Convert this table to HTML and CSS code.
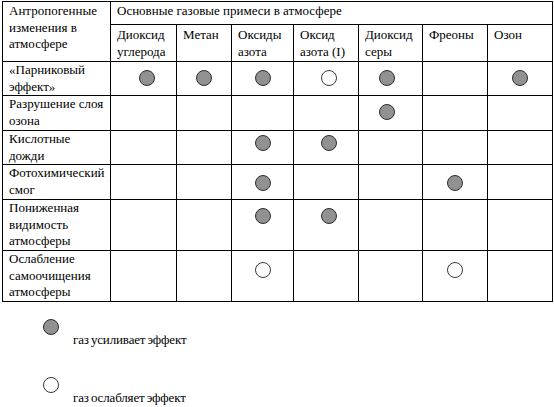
FILE: index.html
```html
<!DOCTYPE html>
<html lang="ru">
<head>
<meta charset="utf-8">
<link rel="stylesheet" href="styles.css">
</head>
<body>
<table class="grid">
  <colgroup>
    <col class="c1"><col class="c2"><col class="c3"><col class="c4"><col class="c5"><col class="c6"><col class="c7"><col class="c8">
  </colgroup>
  <tr class="h1">
    <td rowspan="2">Антропогенные изменения в атмосфере</td>
    <td colspan="7">Основные газовые примеси в атмосфере</td>
  </tr>
  <tr class="h2">
    <td>Диоксид углерода</td>
    <td>Метан</td>
    <td>Оксиды азота</td>
    <td>Оксид азота (I)</td>
    <td>Диоксид серы</td>
    <td>Фреоны</td>
    <td>Озон</td>
  </tr>
  <tr class="r r1">
    <td>«Парниковый эффект»</td>
    <td class="m"><span class="dot gray nudge-r"></span></td>
    <td class="m"><span class="dot gray"></span></td>
    <td class="m"><span class="dot gray"></span></td>
    <td class="m"><span class="dot white nudge-r"></span></td>
    <td class="m"><span class="dot gray nudge-l"></span></td>
    <td class="m"></td>
    <td class="m"><span class="dot gray"></span></td>
  </tr>
  <tr class="r r2">
    <td>Разрушение слоя озона</td>
    <td class="m"></td>
    <td class="m"></td>
    <td class="m"></td>
    <td class="m"></td>
    <td class="m"><span class="dot gray nudge-l"></span></td>
    <td class="m"></td>
    <td class="m"></td>
  </tr>
  <tr class="r r3">
    <td>Кислотные дожди</td>
    <td class="m"></td>
    <td class="m"></td>
    <td class="m"><span class="dot gray"></span></td>
    <td class="m"><span class="dot gray nudge-r"></span></td>
    <td class="m"></td>
    <td class="m"></td>
    <td class="m"></td>
  </tr>
  <tr class="r r4">
    <td>Фотохимический смог</td>
    <td class="m"></td>
    <td class="m"></td>
    <td class="m"><span class="dot gray"></span></td>
    <td class="m"></td>
    <td class="m"></td>
    <td class="m"><span class="dot gray"></span></td>
    <td class="m"></td>
  </tr>
  <tr class="r r5">
    <td>Пониженная видимость атмосферы</td>
    <td class="m"></td>
    <td class="m"></td>
    <td class="m"><span class="dot gray"></span></td>
    <td class="m"><span class="dot gray nudge-r"></span></td>
    <td class="m"></td>
    <td class="m"></td>
    <td class="m"></td>
  </tr>
  <tr class="r r6">
    <td>Ослабление самоочищения атмосферы</td>
    <td class="m"></td>
    <td class="m"></td>
    <td class="m"><span class="dot white"></span></td>
    <td class="m"></td>
    <td class="m"></td>
    <td class="m"><span class="dot white"></span></td>
    <td class="m"></td>
  </tr>
</table>

<div class="legend">
  <div class="item">
    <span class="dot gray"></span>
    <span class="label">газ усиливает эффект</span>
  </div>
  <div class="item second">
    <span class="dot white"></span>
    <span class="label">газ ослабляет эффект</span>
  </div>
</div>
</body>
</html>
```

FILE: styles.css
```css
html, body {
  margin: 0;
  padding: 0;
  background: #ffffff;
}

body {
  font-family: "Liberation Serif", "Times New Roman", serif;
  font-size: 13px;
  line-height: 16.5px;
  color: #000000;
  padding: 1px 0 0 2px;
}

.grid {
  border-collapse: collapse;
  table-layout: fixed;
  width: 550px;
}

.c1 { width: 108px; }
.c2 { width: 66px; }
.c3 { width: 55px; }
.c4 { width: 62px; }
.c5 { width: 65px; }
.c6 { width: 64px; }
.c7 { width: 65px; }
.c8 { width: 65px; }

.grid td {
  border: 1px solid #000000;
  padding: 0 4px 0 6px;
  vertical-align: top;
  box-sizing: border-box;
}

.h1 { height: 23px; }
.h1 td { padding-top: 1px; }
.h2 { height: 37px; }
.h2 td { padding-top: 2px; }
.r1 { height: 33px; }
.r2 { height: 35px; }
.r3 { height: 34px; }
.r4 { height: 35px; }
.r5 { height: 51px; }
.r6 { height: 51px; }

.grid td.m {
  text-align: center;
  padding: 0;
  line-height: 0;
}

.r1 td.m { padding-top: 8px; }
.r2 td.m { padding-top: 8px; }
.r3 td.m { padding-top: 4px; }
.r4 td.m { padding-top: 10px; }
.r5 td.m { padding-top: 8px; }
.r6 td.m { padding-top: 11px; }

.dot {
  display: inline-block;
  width: 16px;
  height: 16px;
  border-radius: 50%;
  box-sizing: border-box;
  border: 1.3px solid #2e2e2e;
}

.dot.gray { background: #919191; }
.dot.white { background: #ffffff; border-color: #3a3a3a; }

.nudge-r { margin-left: 6px; }
.nudge-l { margin-right: 8px; }

.legend {
  display: flex;
  flex-direction: column;
  padding-left: 41px;
  margin-top: 17px;
  gap: 30px;
}

.item {
  display: flex;
  flex-direction: column;
  align-items: flex-start;
}

.item .label {
  font-size: 13px;
  line-height: 15px;
  letter-spacing: -0.15px;
  word-spacing: -1px;
  margin-left: 30px;
  margin-top: -3px;
}
```
